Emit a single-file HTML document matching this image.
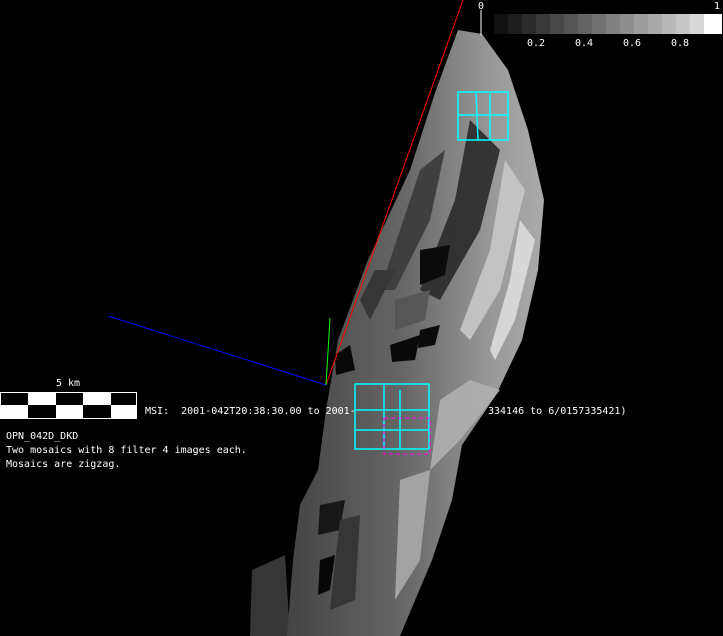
<!DOCTYPE html>
<html><head><style>
body{margin:0;background:#000;width:723px;height:636px;overflow:hidden;position:relative;font-family:"DejaVu Sans Mono","Liberation Mono",monospace;}
.t{position:absolute;color:#fff;font-size:10px;white-space:pre;line-height:14px}
</style></head><body>
<svg width="723" height="636" style="position:absolute;left:0;top:0">
<defs>
<linearGradient id="g" x1="0" y1="0" x2="1" y2="0">
<stop offset="0" stop-color="#444"/><stop offset="0.45" stop-color="#666"/><stop offset="0.8" stop-color="#999"/><stop offset="1" stop-color="#aaa"/>
</linearGradient>
</defs>
<path d="M458 30 L482 34 L508 70 L528 130 L544 200 L538 270 L522 340 L496 395 L462 445 L452 500 L432 560 L400 636 L287 636 L293 560 L300 505 L318 470 L326 410 L338 340 L368 260 L410 170 L436 90 Z" fill="url(#g)"/>
<path d="M252 570 L285 555 L290 636 L250 636 Z" fill="#444" opacity="0.8"/>
<g opacity="0.9">
<path d="M470 120 L500 150 L480 230 L440 300 L420 290 L455 200 Z" fill="#2a2a2a"/>
<path d="M505 160 L525 190 L500 290 L470 340 L460 330 L490 250 Z" fill="#c8c8c8"/>
<path d="M520 220 L535 240 L515 320 L495 360 L490 350 L510 280 Z" fill="#ddd"/>
<path d="M420 170 L445 150 L430 220 L395 290 L380 290 Z" fill="#3a3a3a"/>
<path d="M420 250 L450 245 L445 275 L420 285 Z" fill="#000"/>
<path d="M395 300 L430 290 L425 320 L395 330 Z" fill="#555"/>
<path d="M390 345 L420 335 L415 360 L392 362 Z" fill="#000"/>
<path d="M420 330 L440 325 L435 345 L418 348 Z" fill="#000"/>
<path d="M335 355 L350 345 L355 370 L336 375 Z" fill="#000"/>
<path d="M360 300 L375 270 L395 270 L370 320 Z" fill="#333"/>
<path d="M440 400 L470 380 L500 390 L460 440 L430 470 Z" fill="#b0b0b0"/>
<path d="M320 505 L345 500 L340 530 L318 535 Z" fill="#111"/>
<path d="M340 520 L360 515 L355 600 L330 610 Z" fill="#333"/>
<path d="M320 560 L335 555 L330 590 L318 595 Z" fill="#000"/>
<path d="M400 480 L430 470 L420 560 L395 600 Z" fill="#aaa"/>
</g>
<line x1="463" y1="0" x2="326" y2="385" stroke="#f00" stroke-width="1"/>
<line x1="108" y1="316" x2="326" y2="385" stroke="#00f" stroke-width="1"/>
<line x1="326" y1="385" x2="330" y2="318" stroke="#0f0" stroke-width="1"/>
<g fill="none" stroke="#0ff" stroke-width="1.5">
<rect x="458" y="92" width="50" height="48"/><line x1="476" y1="92" x2="478" y2="140"/><line x1="490" y1="94" x2="490" y2="140"/><line x1="458" y1="115" x2="508" y2="115"/>
<rect x="355" y="384" width="74" height="65"/><line x1="384" y1="384" x2="384" y2="449"/><line x1="400" y1="390" x2="400" y2="449"/><line x1="355" y1="410" x2="429" y2="410"/><line x1="355" y1="430" x2="429" y2="430"/>
</g>
<rect x="384" y="418" width="46" height="36" fill="none" stroke="#f0f" stroke-dasharray="4 3"/>
<rect x="0" y="392" width="137" height="27" fill="#fff"/>
<g fill="#000"><rect x="1" y="393" width="27" height="12"/><rect x="56" y="393" width="27" height="12"/><rect x="111" y="393" width="25" height="12"/><rect x="28" y="405" width="28" height="13"/><rect x="83" y="405" width="28" height="13"/></g>
<line x1="481" y1="10" x2="481" y2="35" stroke="#fff"/>
<g>
<rect x="494" y="14" width="14" height="20" fill="#111"/><rect x="508" y="14" width="14" height="20" fill="#1e1e1e"/><rect x="522" y="14" width="14" height="20" fill="#2b2b2b"/><rect x="536" y="14" width="14" height="20" fill="#393939"/><rect x="550" y="14" width="14" height="20" fill="#474747"/><rect x="564" y="14" width="14" height="20" fill="#555"/><rect x="578" y="14" width="14" height="20" fill="#636363"/><rect x="592" y="14" width="14" height="20" fill="#717171"/><rect x="606" y="14" width="14" height="20" fill="#808080"/><rect x="620" y="14" width="14" height="20" fill="#8e8e8e"/><rect x="634" y="14" width="14" height="20" fill="#9c9c9c"/><rect x="648" y="14" width="14" height="20" fill="#aaa"/><rect x="662" y="14" width="14" height="20" fill="#b9b9b9"/><rect x="676" y="14" width="14" height="20" fill="#c8c8c8"/><rect x="690" y="14" width="14" height="20" fill="#d8d8d8"/><rect x="704" y="14" width="18" height="20" fill="#fff"/>
</g>
</svg>
<div class="t" style="left:478px;top:0px">0</div>
<div class="t" style="left:714px;top:0px">1</div>
<div class="t" style="left:527px;top:37px">0.2</div>
<div class="t" style="left:575px;top:37px">0.4</div>
<div class="t" style="left:623px;top:37px">0.6</div>
<div class="t" style="left:671px;top:37px">0.8</div>
<div class="t" style="left:56px;top:377px">5 km</div>
<div class="t" style="left:145px;top:405px">MSI:  2001-042T20:38:30.00 to 2001-</div>
<div class="t" style="left:488px;top:405px">334146 to 6/0157335421)</div>
<div class="t" style="left:6px;top:430px">OPN_042D_DKD
Two mosaics with 8 filter 4 images each.
Mosaics are zigzag.</div>
</body></html>
